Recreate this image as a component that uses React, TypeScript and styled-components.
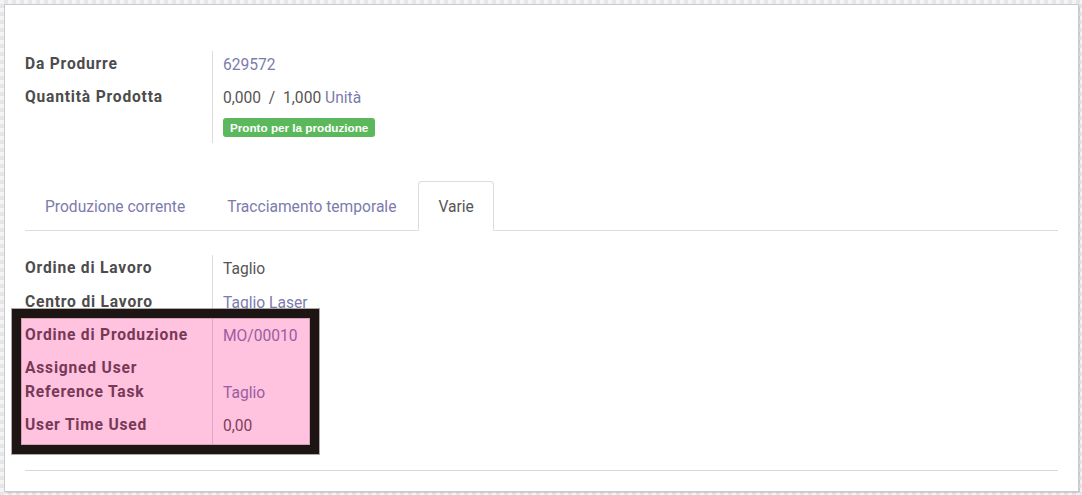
import React from "react";
import styled, { createGlobalStyle } from "styled-components";

const Global = createGlobalStyle`
  html, body { margin: 0; padding: 0; }
  body {
    padding: 4px;
    background-color: #f4f4f4;
    background-image: conic-gradient(#e6e6e6 25%, transparent 0 50%, #e6e6e6 0 75%, transparent 0);
    background-size: 8px 8px;
    font-family: Roboto, "Liberation Sans", sans-serif;
    font-size: 15.6px;
    color: #4c4c4c;
  }
  * { box-sizing: border-box; }
`;

const Sheet = styled.div`
  position: relative;
  width: 1075px;
  height: 488px;
  background: #fff;
  border: 1px solid #c8c8d6;
  box-shadow: 1px 1px 1px rgba(0, 0, 0, 0.12);
  padding: 46px 20px 0 20px;
`;

const Group = styled.div<{ $mt?: number }>`
  display: grid;
  grid-template-columns: 188px 1fr;
  margin-top: ${(p) => p.$mt ?? 0}px;
`;

const Label = styled.div<{ $empty?: boolean }>`
  padding-top: 2px;
  height: ${(p) => (p.$empty ? "23.4px" : "auto")};
  overflow: visible;
  font-weight: 700;
  letter-spacing: 0.8px;
  line-height: 23.4px;
  border-right: 1px solid #dcdcdc;
  color: #4c4c4c;
  white-space: nowrap;
`;

const Value = styled.div<{ $empty?: boolean }>`
  display: flex;
  flex-direction: column;
  align-items: flex-start;
  padding: ${(p) => (p.$empty ? "0" : "3px 0 7px 10px")};
  line-height: 23.4px;
  min-height: ${(p) => (p.$empty ? "23.4px" : "auto")};
  color: #555;
`;

const Link = styled.span`
  color: #7c7bad;
`;

const Badge = styled.span`
  display: block;
  margin-top: 7px;
  margin-bottom: -1px;
  background: #5cb85c;
  color: #fff;
  font-family: "Liberation Sans", Arial, sans-serif;
  font-weight: 700;
  font-size: 11.7px;
  line-height: 19px;
  height: 19px;
  padding: 0 7px;
  border-radius: 3px;
`;

const Tabs = styled.div`
  display: flex;
  margin-top: 38px;
  border-bottom: 1px solid #dcdcdc;
`;

const Tab = styled.div<{ $active?: boolean }>`
  padding: 14px 19px 11px;
  line-height: 23.4px;
  margin-right: 2px;
  margin-bottom: -1px;
  border: 1px solid ${(p) => (p.$active ? "#dcdcdc" : "transparent")};
  border-bottom-color: ${(p) => (p.$active ? "#fff" : "transparent")};
  border-radius: 4px 4px 0 0;
  background: ${(p) => (p.$active ? "#fff" : "transparent")};
  color: ${(p) => (p.$active ? "#555" : "#7c7bad")};
`;

const Rule = styled.hr`
  margin: 24px 0 0 0;
  border: 0;
  border-top: 1px solid #d8d8d8;
`;

const Highlight = styled.div`
  position: absolute;
  left: 7px;
  top: 304px;
  width: 307px;
  height: 145px;
  border: 9px solid #1d1514;
  background: rgba(255, 0, 122, 0.24);
  box-shadow: inset 0 0 0 1px rgba(200, 150, 170, 0.8), 0 0 0 1px rgba(120, 110, 110, 0.6);
  pointer-events: none;
`;

type Row = { label: string; value?: React.ReactNode };

const FieldGroup = ({ rows, mt }: { rows: Row[]; mt?: number }) => (
  <Group $mt={mt}>
    {rows.map((r) => (
      <React.Fragment key={r.label}>
        <Label $empty={r.value === undefined}>{r.label}</Label>
        <Value $empty={r.value === undefined}>{r.value}</Value>
      </React.Fragment>
    ))}
  </Group>
);

export default function App() {
  return (
    <>
      <Global />
      <Sheet>
        <FieldGroup
          rows={[
            { label: "Da Produrre", value: <Link>629572</Link> },
            {
              label: "Quantità Prodotta",
              value: (
                <>
                  <span>
                    0,000&nbsp; /&nbsp; 1,000 <Link>Unità</Link>
                  </span>
                  <Badge>Pronto per la produzione</Badge>
                </>
              ),
            },
          ]}
        />
        <Tabs>
          <Tab>Produzione corrente</Tab>
          <Tab>Tracciamento temporale</Tab>
          <Tab $active>Varie</Tab>
        </Tabs>
        <FieldGroup
          mt={24}
          rows={[
            { label: "Ordine di Lavoro", value: "Taglio" },
            { label: "Centro di Lavoro", value: <Link>Taglio Laser</Link> },
            { label: "Ordine di Produzione", value: <Link>MO/00010</Link> },
            { label: "Assigned User" },
            { label: "Reference Task", value: <Link>Taglio</Link> },
            { label: "User Time Used", value: "0,00" },
          ]}
        />
        <Rule />
        <Highlight />
      </Sheet>
    </>
  );
}
